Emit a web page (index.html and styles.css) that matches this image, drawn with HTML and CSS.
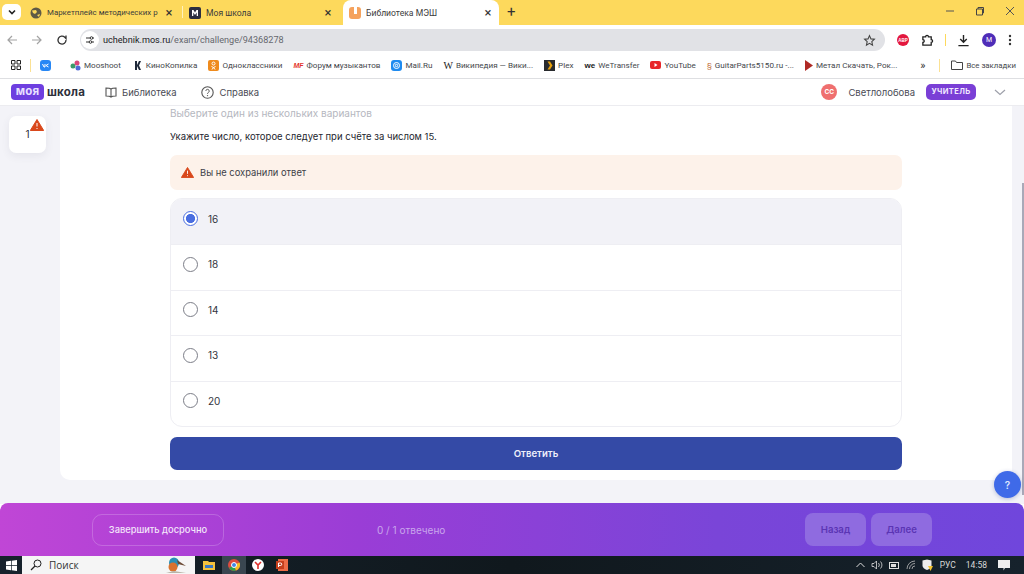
FILE: index.html
```html
<!DOCTYPE html>
<html lang="ru">
<head>
<meta charset="utf-8">
<title>Библиотека МЭШ</title>
<link rel="stylesheet" href="styles.css">
</head>
<body>
<div class="tabbar">
  <div class="tab-menu"><svg width="10" height="10" viewBox="0 0 10 10"><path d="M2 3.500 5 6.500 8 3.500" fill="none" stroke="#222" stroke-width="1.600"/></svg></div>
  <div class="tab t1">
    <svg class="fav" width="12" height="12" viewBox="0 0 12 12"><circle cx="6" cy="6" r="5.500" fill="#5f5a45"/><path d="M2 3.500 6 3l1 2-2 2-2-1zM7 8l3-1-1 3z" fill="#fdd95c"/></svg>
    <span class="tab-title">Маркетплейс методических р</span><span class="tab-x">×</span>
  </div>
  <div class="tab-sep"></div>
  <div class="tab t2">
    <svg class="fav" width="12" height="12" viewBox="0 0 12 12"><rect width="12" height="12" rx="2" fill="#2a2d40"/><path d="M3 9V3h1.500L6 5.500 7.500 3H9v6H7.700V5.500L6 8 4.300 5.500V9z" fill="#fff"/></svg>
    <span class="tab-title">Моя школа</span><span class="tab-x">×</span>
  </div>
  <div class="tab t3">
    <svg class="fav" width="12" height="12" viewBox="0 0 12 12"><rect width="12" height="12" rx="3" fill="#f5a25d"/><rect x="5" y="0" width="3" height="7" fill="#fff"/></svg>
    <span class="tab-title">Библиотека МЭШ</span><span class="tab-x">×</span>
  </div>
  <div class="tab-plus">+</div>
  <div class="win-ctrls">
    <svg width="10" height="10" viewBox="0 0 10 10"><path d="M1 5h8" stroke="#555" fill="none"/></svg>
    <svg width="10" height="10" viewBox="0 0 10 10"><path d="M1.500 3h6v6h-6zM3 3V1.500h5.500V7H7.500" stroke="#444" fill="none"/></svg>
    <svg width="10" height="10" viewBox="0 0 10 10"><path d="M1 1l8 8M9 1l-8 8" stroke="#555" fill="none"/></svg>
  </div>
</div>

<div class="toolbar">
  <svg class="nav" width="12" height="12" viewBox="0 0 12 12"><path d="M11 6H2M6 2 2 6l4 4" fill="none" stroke="#a3a3a3" stroke-width="1.200"/></svg>
  <svg class="nav" width="12" height="12" viewBox="0 0 12 12"><path d="M1 6h9M6 2l4 4-4 4" fill="none" stroke="#a3a3a3" stroke-width="1.200"/></svg>
  <svg class="nav" width="12" height="12" viewBox="0 0 12 12"><path d="M10 6a4 4 0 1 1-1.200-2.800L10 4.500V1.500" fill="none" stroke="#333" stroke-width="1.300"/></svg>
  <div class="omnibox">
    <span class="site-ico"><svg width="10" height="10" viewBox="0 0 10 10"><path d="M1 3h4M7 7h2M1 7h3M8 3h1" stroke="#333" fill="none"/><circle cx="6.500" cy="3" r="1.300" fill="none" stroke="#333"/><circle cx="5.500" cy="7" r="1.300" fill="none" stroke="#333"/></svg></span>
    <span class="url"><b>uchebnik.mos.ru</b>/exam/challenge/94368278</span>
    <svg class="star" width="13" height="13" viewBox="0 0 24 24"><path d="m12 3 2.700 6 6.300.7-4.700 4.300 1.300 6.500L12 17.200 6.400 20.500 7.700 14 3 9.700 9.300 9z" fill="none" stroke="#444" stroke-width="2"/></svg>
  </div>
  <div class="tool-icons">
    <span class="abp">ABP</span>
    <svg width="13" height="13" viewBox="0 0 14 14"><path d="M2 3h3a1.500 1.500 0 0 1 3 0h3v3a1.500 1.500 0 0 1 0 3v3H2V9a1.500 1.500 0 0 0 0-3z" fill="none" stroke="#222" stroke-width="1.400"/></svg>
    <span class="tool-sep"></span>
    <svg width="13" height="13" viewBox="0 0 14 14"><path d="M7 1v8M3.500 5.500 7 9l3.500-3.500M1.500 12.500h11" fill="none" stroke="#222" stroke-width="1.500"/></svg>
    <span class="avatar">M</span>
    <svg width="4" height="12" viewBox="0 0 4 12"><circle cx="2" cy="2" r="1.200" fill="#333"/><circle cx="2" cy="6" r="1.200" fill="#333"/><circle cx="2" cy="10" r="1.200" fill="#333"/></svg>
  </div>
</div>

<div class="bookmarks">
  <svg class="apps" width="10" height="10" viewBox="0 0 10 10"><path d="M.5.500h3.500v3.500H.5zM6 .5h3.500v3.500H6zM.5 6h3.500v3.500H.5zM6 6h3.500v3.500H6z" fill="none" stroke="#222"/></svg>
  <span class="bm-sep"></span>
  <span class="bm vk"><svg width="11" height="11" viewBox="0 0 11 11"><rect width="11" height="11" rx="3" fill="#2787f5"/><path d="M2.500 4 4 7h1V4M8.500 4 6 5.500 8.500 7" stroke="#fff" fill="none"/></svg></span>
  <span class="bm m1"><svg width="11" height="11" viewBox="0 0 11 11"><circle cx="3" cy="6" r="2.500" fill="#3a9a6a"/><circle cx="7" cy="3" r="2.500" fill="#d9477a"/><circle cx="8" cy="8" r="2.500" fill="#4f6bd8"/></svg>Mooshoot</span>
  <span class="bm"><svg width="11" height="11" viewBox="0 0 11 11"><path d="M3 1h2v4l2-4h2L7 5.500 9 10H7L5 6v4H3z" fill="#1f2a3a"/></svg>КиноКопилка</span>
  <span class="bm"><svg width="11" height="11" viewBox="0 0 11 11"><rect width="11" height="11" rx="2" fill="#ef8b1d"/><circle cx="5.500" cy="3.500" r="1.500" fill="none" stroke="#fff"/><path d="M3.500 6.500 5.500 7.500 7.500 6.500M5.500 7.500 4 9.500M5.500 7.500 7 9.500" stroke="#fff" fill="none"/></svg>Одноклассники</span>
  <span class="bm"><span class="mf">MF</span>Форум музыкантов</span>
  <span class="bm"><svg width="11" height="11" viewBox="0 0 11 11"><rect width="11" height="11" rx="3" fill="#1f8bf0"/><circle cx="5.500" cy="5.500" r="3" fill="none" stroke="#fff"/><circle cx="5.500" cy="5.500" r="1.200" fill="none" stroke="#fff"/></svg>Mail.Ru</span>
  <span class="bm"><span class="wiki">W</span>Википедия — Вики...</span>
  <span class="bm"><svg width="11" height="11" viewBox="0 0 11 11"><rect width="11" height="11" fill="#282a2d"/><path d="M3.500 1.500H6L8.500 5.500 6 9.500H3.500L6 5.500z" fill="#e5a00d"/></svg>Plex</span>
  <span class="bm"><span class="we">we</span>WeTransfer</span>
  <span class="bm"><svg width="11" height="8" viewBox="0 0 11 8"><rect width="11" height="8" rx="2" fill="#e8262a"/><path d="M4.500 2v4l3-2z" fill="#fff"/></svg>YouTube</span>
  <span class="bm"><span class="gp">§</span>GuitarParts5150.ru -...</span>
  <span class="bm"><svg width="8" height="11" viewBox="0 0 8 11"><path d="M0 0 8 5.500 0 11z" fill="#b02a25"/></svg>Метал Скачать, Рок...</span>
  <span class="bm-more">»</span>
  <span class="bm-sep last"></span>
  <span class="bm all"><svg width="12" height="10" viewBox="0 0 12 10"><path d="M.5 1h4l1 1.500h6v7H.5z" fill="none" stroke="#444"/></svg>Все закладки</span>
</div>

<header class="app-header">
  <div class="logo"><span class="logo-my">моя</span><span class="logo-school">школа</span></div>
  <a class="nav-link lib"><svg width="12" height="11" viewBox="0 0 12 11"><path d="M6 2C5 1 3 1 1 1v8c2 0 4 0 5 1 1-1 3-1 5-1V1C9 1 7 1 6 2zM6 2v8" fill="none" stroke="#555" stroke-width="1.100"/></svg>Библиотека</a>
  <a class="nav-link help"><svg width="13" height="13" viewBox="0 0 13 13"><circle cx="6.500" cy="6.500" r="5.700" fill="none" stroke="#555" stroke-width="1.100"/><path d="M4.800 5a1.700 1.700 0 1 1 2.600 1.500c-.6.400-.9.700-.9 1.300" fill="none" stroke="#555"/><circle cx="6.500" cy="9.600" r=".7" fill="#555"/></svg>Справка</a>
  <div class="user">
    <span class="user-badge">СС</span>
    <span class="user-name">Светлолобова</span>
    <span class="role">УЧИТЕЛЬ</span>
    <svg class="chev" width="12" height="7" viewBox="0 0 12 7"><path d="M1 1l5 4.500L11 1" fill="none" stroke="#9ea0aa" stroke-width="1.200"/></svg>
  </div>
</header>

<main class="stage">
  <aside class="rail">
    <div class="qcard">1
      <svg class="qwarn" width="14" height="12" viewBox="0 0 14 12"><path d="M7 0.500 13.700 11.500H.3z" fill="#d9481c" stroke="#d9481c" stroke-linejoin="round"/><path d="M7 4v3.500M7 9v1" stroke="#fff"/></svg>
    </div>
  </aside>
  <section class="sheet">
    <p class="hint">Выберите один из нескольких вариантов</p>
    <p class="question">Укажите число, которое следует при счёте за числом 15.</p>
    <div class="alert">
      <svg width="13" height="11" viewBox="0 0 14 12"><path d="M7 0.500 13.700 11.500H.3z" fill="#d9481c" stroke="#d9481c" stroke-linejoin="round"/><path d="M7 4v3.500M7 9v1" stroke="#fff"/></svg>
      Вы не сохранили ответ
    </div>
    <div class="options">
      <div class="opt on"><span class="radio"></span>16</div>
      <div class="opt"><span class="radio"></span>18</div>
      <div class="opt"><span class="radio"></span>14</div>
      <div class="opt"><span class="radio"></span>13</div>
      <div class="opt"><span class="radio"></span>20</div>
    </div>
    <button class="submit">Ответить</button>
  </section>
  <div class="scrollbar"><span class="thumb"></span></div>
  <div class="fab">?</div>
</main>

<footer class="actionbar">
  <button class="finish">Завершить досрочно</button>
  <span class="progress">0 / 1 отвечено</span>
  <div class="pager"><button class="pg">Назад</button><button class="pg">Далее</button></div>
</footer>

<div class="taskbar">
  <span class="start"><svg width="11" height="11" viewBox="0 0 11 11"><path d="M0 1.500 5 .8v4.400H0zM5.700.7 11 0v5.200H5.700zM0 5.900h5v4.400L0 9.600zM5.700 5.900H11V11l-5.300-.7z" fill="#fff"/></svg></span>
  <div class="search">
    <svg width="12" height="12" viewBox="0 0 12 12"><circle cx="7.500" cy="4.500" r="3.500" fill="none" stroke="#222"/><path d="M5 7 1 11" stroke="#222" stroke-width="1.200"/></svg>
    <span>Поиск</span>
    <svg class="bird" width="24" height="18" viewBox="0 0 24 18"><ellipse cx="10" cy="7" rx="5" ry="5.500" fill="#2b8fb5"/><ellipse cx="9" cy="11" rx="4.500" ry="4.500" fill="#d9722e"/><path d="M13 4l9 6-8-2z" fill="#6b4a35"/><path d="M2 17l8-2 12 2z" fill="#b9b4a8"/></svg>
  </div>
  <span class="tb-app folder"><svg width="12" height="10" viewBox="0 0 12 10"><path d="M0 1h5l1 1h6v8H0z" fill="#f3c13c"/><rect x="2" y="5" width="8" height="3" fill="#3a78c2"/></svg></span>
  <span class="tb-app active"><svg width="12" height="12" viewBox="0 0 12 12"><circle cx="6" cy="6" r="6" fill="#dd4b3e"/><path d="M6 6 1 9a6 6 0 0 0 7 2.600z" fill="#2fa04c"/><path d="M6 6l5.500-2.400a6 6 0 0 1-3.500 8z" fill="#f6c026"/><circle cx="6" cy="6" r="2.500" fill="#3f86e8" stroke="#fff"/></svg></span>
  <span class="tb-app"><svg width="12" height="12" viewBox="0 0 12 12"><circle cx="6" cy="6" r="6" fill="#fff"/><path d="M3 3l3 3 3-3M6 6v4" stroke="#e0312c" stroke-width="1.600" fill="none"/></svg></span>
  <span class="tb-app"><svg width="12" height="12" viewBox="0 0 12 12"><rect x="2" width="10" height="12" fill="#ed6c47"/><rect y="2" width="8" height="8" fill="#c43e1c"/><path d="M2.500 8V4h2a1.200 1.200 0 0 1 0 2.500h-2" fill="none" stroke="#fff"/></svg></span>
  <div class="tray">
    <svg width="9" height="6" viewBox="0 0 9 6"><path d="M.5 5 4.500 1l4 4" fill="none" stroke="#ddd"/></svg>
    <svg width="12" height="10" viewBox="0 0 12 10"><path d="M1 3.500h2L5.500 1v8L3 6.500H1zM7.500 3a3 3 0 0 1 0 4M9.500 1.500a5 5 0 0 1 0 7" fill="none" stroke="#ddd" stroke-width=".8"/></svg>
    <svg width="11" height="7" viewBox="0 0 11 7"><rect x=".5" y=".5" width="9" height="6" fill="none" stroke="#ddd"/><rect x="2" y="2" width="5" height="3" fill="#ddd"/></svg>
    <svg width="10" height="10" viewBox="0 0 10 10"><path d="M1 9a8 8 0 0 1 8-8M3.500 9A5.500 5.500 0 0 1 9 3.500M6 9a3 3 0 0 1 3-3" fill="none" stroke="#bbb" stroke-width=".8"/></svg>
    <svg width="11" height="12" viewBox="0 0 11 12"><path d="M.5 1.500 5 .5l4.500 1v5c0 2-2 3.500-4.500 4.500C2.500 10 .5 8.500.5 6.500z" fill="#ececec"/><path d="M6 7h5l-2.500 5z" fill="#f2c230"/></svg>
    <span class="lang">РУС</span>
    <span class="clock">14:58</span>
    <svg width="12" height="11" viewBox="0 0 12 11"><path d="M0 0h12v8H7L5.500 10.500V8H0z" fill="#eee"/></svg>
  </div>
</div>
</body>
</html>
```
FILE: styles.css
```css
* { box-sizing: border-box; }
html, body { margin: 0; height: 574px; overflow: hidden; }
body { display: flex; flex-direction: column; width: 1024px; font-family: Inter, "Liberation Sans", sans-serif; color: #2b2d36; background: #fff; }
p { margin: 0; }
button { font-family: inherit; border: 0; }

.tabbar { height: 25px; flex: none; background: #fdd95c; display: flex; align-items: flex-end; padding-left: 2px; font-family: Roboto, sans-serif; font-size: 8.600px; color: #3b3b3b; }
.tab-menu { width: 19px; height: 16px; margin-bottom: 5px; background: #fff; border-radius: 5px; display: flex; align-items: center; justify-content: center; flex: none; }
.tab { height: 25px; display: flex; align-items: center; flex: none; }
.fav { flex: none; }
.tab-title { flex: 1; min-width: 0; white-space: nowrap; }
.tab-x { font-size: 13px; width: 10px; text-align: center; color: #333; flex: none; }
.t1 { width: 161px; padding-left: 9px; padding-right: 8px; gap: 5px; }
.t1 .tab-title { font-size: 7.900px; }
.tab-sep { width: 1px; height: 12px; margin: 0 0 7px; background: #fff2bd; flex: none; }
.t2 { width: 156px; padding-left: 6px; padding-right: 6px; gap: 5px; }
.t3 { width: 156px; margin-left: 4px; padding-left: 6px; padding-right: 6px; gap: 5px; background: #fff; border-radius: 8px 8px 0 0; }
.tab-plus { margin: 0 0 5px 8px; font-size: 15px; line-height: 15px; color: #333; }
.win-ctrls { margin-left: auto; margin-right: 9px; display: flex; gap: 20px; align-self: flex-start; margin-top: 6px; }

.toolbar { height: 27px; flex: none; background: #fff; display: flex; align-items: center; padding: 3px 0 0 6px; }
.nav { flex: none; margin-right: 13px; }
.nav:nth-child(3) { margin-right: 14px; }
.omnibox { width: 805px; height: 22px; flex: none; margin-left: -2px; border-radius: 11px; background: #e1e2e6; display: flex; align-items: center; padding: 0 9px 0 1px; font-family: Roboto, sans-serif; font-size: 9.100px; color: #66686e; }
.site-ico { width: 18px; height: 18px; background: #fff; border-radius: 50%; display: flex; align-items: center; justify-content: center; margin-right: 4px; flex: none; }
.url { flex: 1; }
.url b { font-weight: 400; color: #202124; }
.tool-icons { display: flex; align-items: center; margin-left: 12px; gap: 12px; }
.abp { width: 12px; height: 12px; border-radius: 50%; background: #e3173e; color: #fff; font: 700 4.500px "Liberation Sans", sans-serif; display: flex; align-items: center; justify-content: center; }
.tool-sep { width: 1px; height: 12px; background: #fdd95c; margin: 0 -1px; }
.avatar { width: 14px; height: 14px; border-radius: 50%; background: #4f2db8; color: #fff; font: 7px Roboto, sans-serif; display: flex; align-items: center; justify-content: center; }

.bookmarks { height: 27px; flex: none; background: #fff; border-bottom: 1px solid #dedfe2; display: flex; align-items: center; padding: 0 8px 0 11px; font-family: Roboto, sans-serif; font-size: 8.100px; color: #45474c; white-space: nowrap; }
.apps { flex: none; }
.bm-sep { width: 1px; height: 13px; background: #fbe193; flex: none; margin-left: 9px; }
.bm { display: inline-flex; align-items: center; gap: 3px; flex: none; margin-left: 11px; }
.vk { margin-left: 9px; }
.m1 { margin-left: 19px; }
.mf { color: #e3342b; font: italic 700 7px "Liberation Sans", sans-serif; }
.wiki { font: 10px "Liberation Serif", serif; color: #222; }
.we { font: 900 8px "Liberation Sans", sans-serif; color: #222; }
.gp { color: #c2703c; font-size: 8px; }
.bm-more { margin-left: auto; font-size: 11px; color: #333; }
.bm-sep.last { margin-left: 14px; }
.all { margin-left: 11px; font-size: 7.800px; }

.app-header { height: 27px; flex: none; background: #fff; border-bottom: 1px solid #ececf0; display: flex; align-items: center; padding-left: 11px; font-size: 9.500px; color: #4a4c55; }
.logo { display: flex; align-items: center; font-weight: 700; font-size: 11.500px; letter-spacing: .2px; }
.logo-my { width: 33px; height: 16px; background: #6e3fe0; color: #e8e0ff; border-radius: 4px; text-align: center; line-height: 15px; }
.logo-school { color: #2d2f3a; margin-left: 3px; }
.nav-link { display: flex; align-items: center; gap: 5px; }
.lib { margin-left: 20px; }
.help { margin-left: 25px; }
.user { margin-left: auto; display: flex; align-items: center; padding-right: 18px; }
.user-badge { width: 16px; height: 16px; border-radius: 50%; background: #ef6f6f; color: #fff; font-size: 6.500px; font-weight: 700; text-align: center; line-height: 16px; }
.user-name { margin-left: 11px; }
.role { margin-left: 11px; width: 50px; height: 16px; border-radius: 5px; background: #7a3fd6; color: #f1eaff; font-size: 7.500px; font-weight: 700; letter-spacing: .4px; text-align: center; line-height: 15px; }
.chev { margin-left: 18px; }

.stage { flex: 1; min-height: 0; display: flex; align-items: flex-start; background: #f3f3f8; position: relative; }
.rail { width: 60px; flex: none; padding: 10px 0 0 9px; }
.qcard { width: 37px; height: 37px; background: #fff; border-radius: 7px; box-shadow: 0 3px 8px rgba(60, 60, 90, .08); display: flex; align-items: center; justify-content: center; font-size: 10px; color: #2b2d36; position: relative; padding-bottom: 1px; }
.qwarn { position: absolute; top: 3px; right: 2px; }
.sheet { width: 952px; height: 374px; flex: none; background: #fff; border-radius: 0 0 10px 10px; padding: 0 110px; }
.hint { font-size: 10px; line-height: 14px; color: #b5b7c0; }
.question { font-size: 9.500px; line-height: 14px; color: #24262e; margin-top: 10px; }
.alert { height: 35px; margin-top: 11px; border-radius: 7px; background: #fdf2ea; display: flex; align-items: center; gap: 6px; padding-left: 11px; padding-bottom: 1px; font-size: 9.400px; color: #3d3f48; }
.options { margin-top: 8px; border: 1px solid #eeeef3; border-radius: 12px; overflow: hidden; }
.opt { height: 45.500px; display: flex; align-items: center; gap: 10px; padding: 0 0 6px 12px; font-size: 10px; color: #33353e; border-top: 1px solid #eeeef3; }
.opt:first-child { border-top: 0; height: 45px; }
.on { background: #f2f2f7; }
.radio { width: 15px; height: 15px; border: 1.500px solid #7c7e88; border-radius: 50%; background: #fff; flex: none; }
.on .radio { border-color: #4a6ee0; background: radial-gradient(circle, #4a6ee0 0 4.300px, #fff 4.800px); }
.submit { display: block; width: 100%; height: 33px; margin-top: 10px; border-radius: 7px; background: #344aa6; color: #eef0fb; font-size: 9.600px; font-weight: 600; }
.scrollbar { flex: 1; align-self: stretch; position: relative; }
.thumb { position: absolute; width: 2px; right: 0; top: 77px; bottom: 9px; background: #a9a9b8; }
.fab { position: absolute; right: 3px; bottom: 6px; width: 27px; height: 27px; border-radius: 50%; background: #3f6ae8; color: #dfe7ff; font-size: 10px; font-weight: 600; display: flex; align-items: center; justify-content: center; box-shadow: 0 1px 4px rgba(40, 60, 140, .3); }

.actionbar { height: 53px; flex: none; border-radius: 8px 8px 0 0; margin-top: -1px; background: linear-gradient(90deg, #c046d6 0%, #9a3dd6 35%, #7a45d8 70%, #7046dc 100%); display: flex; align-items: center; padding-left: 92px; position: relative; z-index: 1; }
.finish { width: 132px; height: 32px; border-radius: 10px; background: transparent; border: 1px solid rgba(255, 255, 255, .2); color: #f3e6fa; font-size: 9.300px; font-weight: 500; }
.progress { margin-left: 153px; font-size: 10px; color: #c9a6ec; }
.pager { margin-left: auto; margin-right: 92px; display: flex; gap: 5px; }
.pg { width: 61px; height: 33px; border-radius: 8px; background: #8f6be0; color: #5b35b4; font-size: 9.600px; font-weight: 600; }

.taskbar { height: 18px; flex: none; background: linear-gradient(90deg, #16222c, #10181d 50%, #16222c); display: flex; align-items: center; font-family: Roboto, sans-serif; }
.start { width: 22px; display: flex; justify-content: center; }
.search { width: 173px; height: 18px; background: #f5f5f5; display: flex; align-items: center; gap: 7px; padding-left: 8px; font-family: "Open Sans", sans-serif; font-size: 10px; color: #333; overflow: hidden; }
.bird { margin-left: auto; margin-right: 7px; }
.tb-app { width: 24px; height: 18px; display: flex; align-items: center; justify-content: center; flex: none; }
.folder { margin-left: 2px; }
.active { background: #3a4650; margin-left: 1px; }
.tray { margin-left: auto; display: flex; align-items: center; gap: 6px; padding-right: 14px; color: #d8d8d8; font-size: 8.500px; }
.lang { margin-left: 1px; }
.clock { margin: 0 5px 0 4px; }
```
